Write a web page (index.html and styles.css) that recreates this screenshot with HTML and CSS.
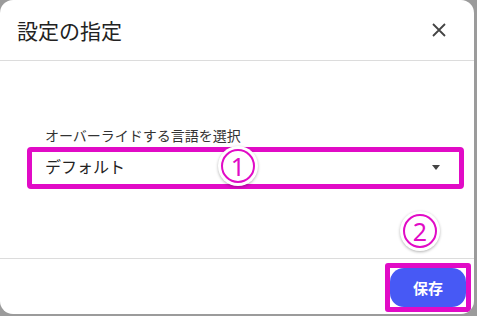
FILE: index.html
```html
<!DOCTYPE html>
<html lang="ja">
<head>
<meta charset="utf-8">
<link rel="stylesheet" href="styles.css">
</head>
<body>
<div class="dialog">
  <header class="dialog-header">
    <h1 class="title">設定の指定</h1>
    <svg class="close" width="14" height="14" viewBox="0 0 14 14"><path d="M1 1L13 13M13 1L1 13" stroke="#444" stroke-width="1.8" fill="none"/></svg>
  </header>
  <section class="dialog-body">
    <div class="label">オーバーライドする言語を選択</div>
    <div class="select-frame">
      <span class="select-text">デフォルト</span>
      <span class="caret"></span>
    </div>
  </section>
  <footer class="dialog-footer">
    <div class="btn-frame"><button class="save">保存</button></div>
  </footer>
  <div class="marker m1"><span class="ring">1</span></div>
  <div class="marker m2"><span class="ring">2</span></div>
</div>
</body>
</html>
```
FILE: styles.css
```css
html, body { margin: 0; padding: 0; }
body {
  background: #9b9b9b;
  width: 477px;
  height: 316px;
  overflow: hidden;
  font-family: "Noto Sans CJK JP", "Noto Sans", sans-serif;
}
.dialog {
  position: relative;
  width: 474px;
  height: 314px;
  background: #fff;
  border-radius: 13px;
  overflow: hidden;
  display: flex;
  flex-direction: column;
}
.dialog-header {
  height: 60px;
  border-bottom: 1px solid #dcdcdc;
  display: flex;
  align-items: center;
  justify-content: space-between;
  padding: 0 28px 0 17px;
}
.title {
  margin: 0;
  font-size: 21px;
  font-weight: 400;
  color: #222;
  line-height: 24px;
}
.close { display: block; }
.dialog-body {
  height: 132px;
  padding-top: 65px;
  border-bottom: 1px solid #dcdcdc;
}
.label {
  margin-left: 45px;
  font-size: 14px;
  line-height: 18px;
  color: #333;
  margin-bottom: 3px;
}
.select-frame {
  margin-left: 27px;
  height: 32px;
  border: 5px solid #e10bc6;
  border-radius: 4px;
  display: flex;
  align-items: center;
  justify-content: space-between;
  padding: 0 19px 0 13px;
  box-sizing: content-box;
  width: 395px;
}
.select-text {
  font-size: 16px;
  color: #222;
  line-height: 20px;
  margin-top: -4px;
}
.caret {
  width: 0; height: 0;
  border-left: 4.5px solid transparent;
  border-right: 4.5px solid transparent;
  border-top: 5px solid #444;
  margin-top: -1px;
}
.dialog-footer {
  display: flex;
  justify-content: flex-end;
  padding: 4px 3px 0 0;
}
.btn-frame {
  border: 5px solid #e10bc6;
  border-radius: 3px;
  background: #fff;
  width: 76px;
  height: 39px;
}
.save {
  width: 76px;
  height: 39px;
  border: none;
  border-radius: 14px;
  background: #4759f5;
  color: #fff;
  font-family: "Noto Sans CJK JP", sans-serif;
  font-weight: 700;
  font-size: 15px;
  padding: 0;
}
.marker {
  position: absolute;
  width: 40px;
  height: 40px;
  border-radius: 50%;
  background: #fff;
  box-shadow: 0 1px 3px rgba(0,0,0,0.3);
  display: flex;
  align-items: center;
  justify-content: center;
}
.m1 { left: 218px; top: 146px; }
.m2 { left: 400px; top: 211px; }
.ring {
  width: 30px;
  height: 30px;
  border: 2px solid #e10bc6;
  border-radius: 50%;
  color: #e10bc6;
  font-family: "Noto Sans", sans-serif;
  font-size: 25px;
  line-height: 30px;
  text-align: center;
  font-weight: 400;
}
```
